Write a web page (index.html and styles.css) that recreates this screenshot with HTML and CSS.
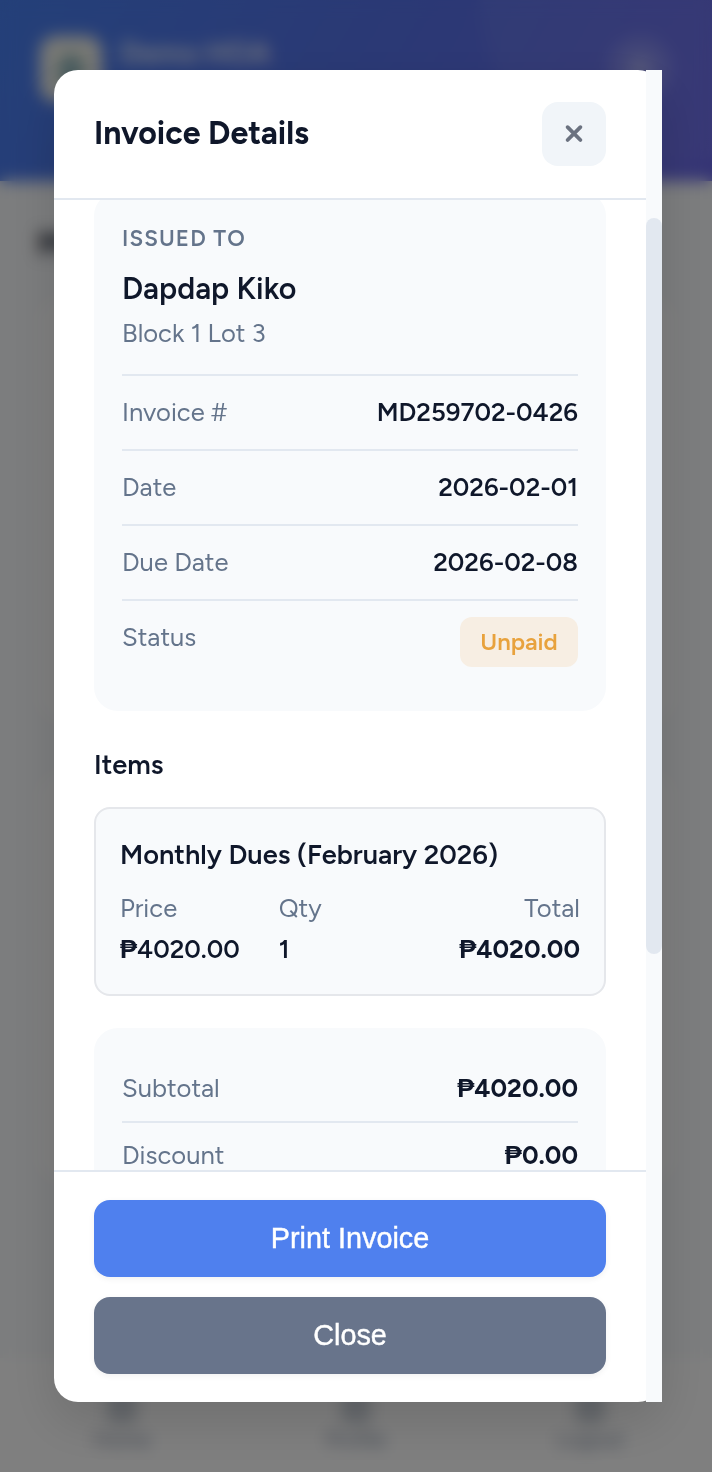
FILE: index.html
```html
<!DOCTYPE html>
<html lang="en">
<head>
  <meta charset="UTF-8">
  <meta name="viewport" content="width=device-width, initial-scale=1.0">
  <title>Invoice Details</title>
  <link rel="stylesheet" href="styles.css">
</head>
<body>
  <div class="page">
    <header class="top-bar">
      <div class="logo"><span class="logo-mark"></span></div>
      <h1>Demo HOA</h1>
      <div class="avatar"><span class="avatar-dot"></span></div>
    </header>
    <main class="content">
      <h2>My</h2>
      <div class="panel"></div>
      <div class="panel tall"></div>
    </main>
    <nav class="bottom-nav">
      <a><span class="nav-icon"></span>Home</a>
      <a><span class="nav-icon"></span>Profile</a>
      <a><span class="nav-icon"></span>Logout</a>
    </nav>
  </div>

  <!-- Invoice Modal -->
  <div class="overlay">
    <div class="modal">
      <div class="modal-main">
        <div class="modal-header">
          <h2>Invoice Details</h2>
          <button class="close-icon" aria-label="Close">
            <svg width="20" height="20" viewBox="0 0 20 20" fill="none" stroke="#6b7280" stroke-width="3.8" stroke-linecap="round">
              <path d="M3.6 3.2 L16.4 16 M16.4 3.2 L3.6 16"/>
            </svg>
          </button>
        </div>

        <div class="modal-body">
          <div class="card info-card">
            <div class="issued">
              <p class="issued-label">ISSUED TO</p>
              <p class="issued-name">Dapdap Kiko</p>
              <p class="issued-address">Block 1 Lot 3</p>
            </div>
            <div class="info-row"><span>Invoice #</span><strong>MD259702-0426</strong></div>
            <div class="info-row"><span>Date</span><strong>2026-02-01</strong></div>
            <div class="info-row"><span>Due Date</span><strong>2026-02-08</strong></div>
            <div class="info-row"><span>Status</span><span class="badge">Unpaid</span></div>
          </div>

          <h3>Items</h3>
          <div class="item">
            <h4>Monthly Dues (February 2026)</h4>
            <div class="item-grid">
              <div><span>Price</span><strong><i class="peso">₱</i>4020.00</strong></div>
              <div><span>Qty</span><strong>1</strong></div>
              <div class="right"><span>Total</span><strong class="bold"><i class="peso">₱</i>4020.00</strong></div>
            </div>
          </div>

          <div class="card totals">
            <div class="total-row"><span>Subtotal</span><strong class="bold"><i class="peso">₱</i>4020.00</strong></div>
            <div class="total-row"><span>Discount</span><strong class="bold"><i class="peso">₱</i>0.00</strong></div>
          </div>
        </div>

        <div class="modal-footer">
          <button class="btn btn-print">Print Invoice</button>
          <button class="btn btn-close">Close</button>
        </div>
      </div>
      <div class="scroll-track"><div class="scroll-thumb"></div></div>
    </div>
  </div>
</body>
</html>
```
FILE: styles.css
```css
* { margin: 0; padding: 0; box-sizing: border-box; }
body {
  height: 1472px;
  overflow: hidden;
  font-family: 'Figtree', 'Lato', sans-serif;
  font-size: 25.6px;
  line-height: 1.6;
  color: #0f172a;
  background-color: #f8fafc;
}
strong, h3, h4 { font-weight: 600; }
.bold { font-weight: 700; }

/* Page behind the modal */
.page {
  height: 1472px;
  display: flex;
  flex-direction: column;
}
.top-bar {
  height: 181px;
  padding: 36px 40px;
  display: flex;
  align-items: flex-start;
  gap: 18px;
  background:
    radial-gradient(circle at 650px 0, rgba(255, 255, 255, 0.05) 165px, rgba(255, 255, 255, 0) 175px),
    linear-gradient(120deg, #4880f2 0%, #5672ea 50%, #6a68ea 100%);
}
.top-bar h1 {
  flex: 1;
  font-size: 29px;
  line-height: 34px;
  color: rgba(255, 255, 255, 0.85);
}
.logo {
  width: 62px;
  height: 66px;
  padding: 18px;
  border-radius: 16px;
  background-color: #f4f4ea;
}
.logo-mark {
  display: block;
  width: 26px;
  height: 34px;
  border-radius: 50%;
  background-color: #8fb6bc;
}
.avatar {
  width: 64px;
  height: 64px;
  padding: 20px;
  border-radius: 50%;
  background-color: rgba(255, 255, 255, 0.16);
}
.avatar-dot {
  display: block;
  width: 24px;
  height: 24px;
  border-radius: 50%;
  background-color: rgba(255, 255, 255, 0.3);
}
.content {
  flex: 1;
  padding: 40px 38px 0;
}
.content h2 { font-size: 32px; line-height: 46px; }
.panel {
  height: 425px;
  margin-top: 30px;
  border-radius: 24px;
  background-color: #fff;
}
.panel.tall { height: 410px; margin-top: 50px; }
.bottom-nav {
  height: 114px;
  padding: 30px 34px 0;
  display: flex;
  justify-content: space-between;
  background-color: #fff;
}
.bottom-nav a {
  width: 176px;
  display: flex;
  flex-direction: column;
  align-items: center;
  font-size: 21px;
  line-height: 32px;
  color: #7f8ea5;
}
.bottom-nav a:nth-child(2) { width: 120px; }
.nav-icon {
  width: 30px;
  height: 36px;
  border-radius: 8px;
  background-color: #ccd2da;
}

.overlay {
  position: fixed;
  inset: 0;
  padding: 70px 50px 70px 54px;
  background-color: rgba(0, 0, 0, 0.5);
  -webkit-backdrop-filter: blur(8px);
  backdrop-filter: blur(8px);
}
.modal {
  height: 1332px;
  display: flex;
  background-color: #fff;
  border-radius: 24px;
  box-shadow: 0 20px 50px rgba(0, 0, 0, 0.13);
}
.modal-main {
  flex: 1;
  display: flex;
  flex-direction: column;
}
.modal-header {
  height: 130px;
  padding: 0 40px;
  display: flex;
  justify-content: space-between;
  align-items: center;
  border-bottom: 2px solid #e2e8f0;
}
.modal-header h2 {
  font-size: 32px;
  font-weight: 700;
}
.close-icon {
  width: 64px;
  height: 64px;
  display: flex;
  justify-content: center;
  align-items: center;
  border: none;
  border-radius: 16px;
  background-color: #f1f5f9;
}
.modal-body {
  flex: 1;
  min-height: 0;
  padding: 0 40px;
  overflow: hidden;
}
.card {
  padding: 28px;
  border-radius: 24px;
  background-color: #f8fafc;
}
/* body is scrolled down a little */
.info-card {
  height: 519px;
  margin-top: -8px;
}
.issued { height: 154px; padding-top: 1px; }
.issued-label {
  font-size: 22.4px;
  font-weight: 600;
  line-height: 36px;
  letter-spacing: 1.1px;
  color: #64748b;
}
.issued-name {
  margin-top: 8px;
  font-size: 30.4px;
  font-weight: 600;
  line-height: 48px;
}
.issued-address { line-height: 41px; color: #64748b; }
.info-row {
  display: flex;
  justify-content: space-between;
  align-items: flex-start;
  padding: 16px 0;
  line-height: 41px;
  border-top: 2px solid #e2e8f0;
}
.info-row span, .total-row span, .item-grid span { color: #64748b; }
.info-row .badge {
  width: 118px;
  text-align: center;
  font-size: 24px;
  font-weight: 600;
  line-height: 50px;
  color: #e8a23d;
  background-color: #f7eee3;
  border-radius: 12px;
}
.modal-body h3 {
  margin: 32px 0 20px;
  font-size: 27.2px;
  line-height: 44px;
}
.item {
  height: 189px;
  padding: 24px;
  border: 2px solid #e5e7eb;
  border-radius: 16px;
  background-color: #f8fafc;
}
.item h4 {
  margin-bottom: 12px;
  font-size: 27.2px;
  line-height: 43px;
}
.item-grid {
  display: grid;
  grid-template-columns: repeat(3, 1fr);
  gap: 16px;
  line-height: 41px;
}
.item-grid span, .item-grid strong { display: block; height: 41px; }
.item-grid .right { text-align: right; }
.peso {
  font-family: 'Liberation Sans', Arial, sans-serif;
  font-style: normal;
  line-height: 1;
}
.totals { margin-top: 32px; }
.total-row {
  display: flex;
  justify-content: space-between;
  padding: 12px 0;
  line-height: 41px;
  border-bottom: 2px solid #e2e8f0;
}

.modal-footer {
  padding: 28px 40px;
  display: flex;
  flex-direction: column;
  gap: 20px;
  border-top: 2px solid #e2e8f0;
}
.btn {
  height: 77px;
  border: none;
  border-radius: 16px;
  font-family: 'Liberation Sans', Arial, sans-serif;
  font-size: 28.8px;
  color: #fff;
  -webkit-text-stroke: 0.4px #fff;
  box-shadow: 0 2px 6px rgba(0, 0, 0, 0.06);
}
.btn-print { background-color: #4f80ee; }
.btn-close { background-color: #68748b; }

.scroll-track {
  width: 16px;
  padding-top: 148px;
  background-color: #f8fafc;
}
.scroll-thumb {
  height: 736px;
  border-radius: 8px;
  background-color: #e2e8f0;
}
```
